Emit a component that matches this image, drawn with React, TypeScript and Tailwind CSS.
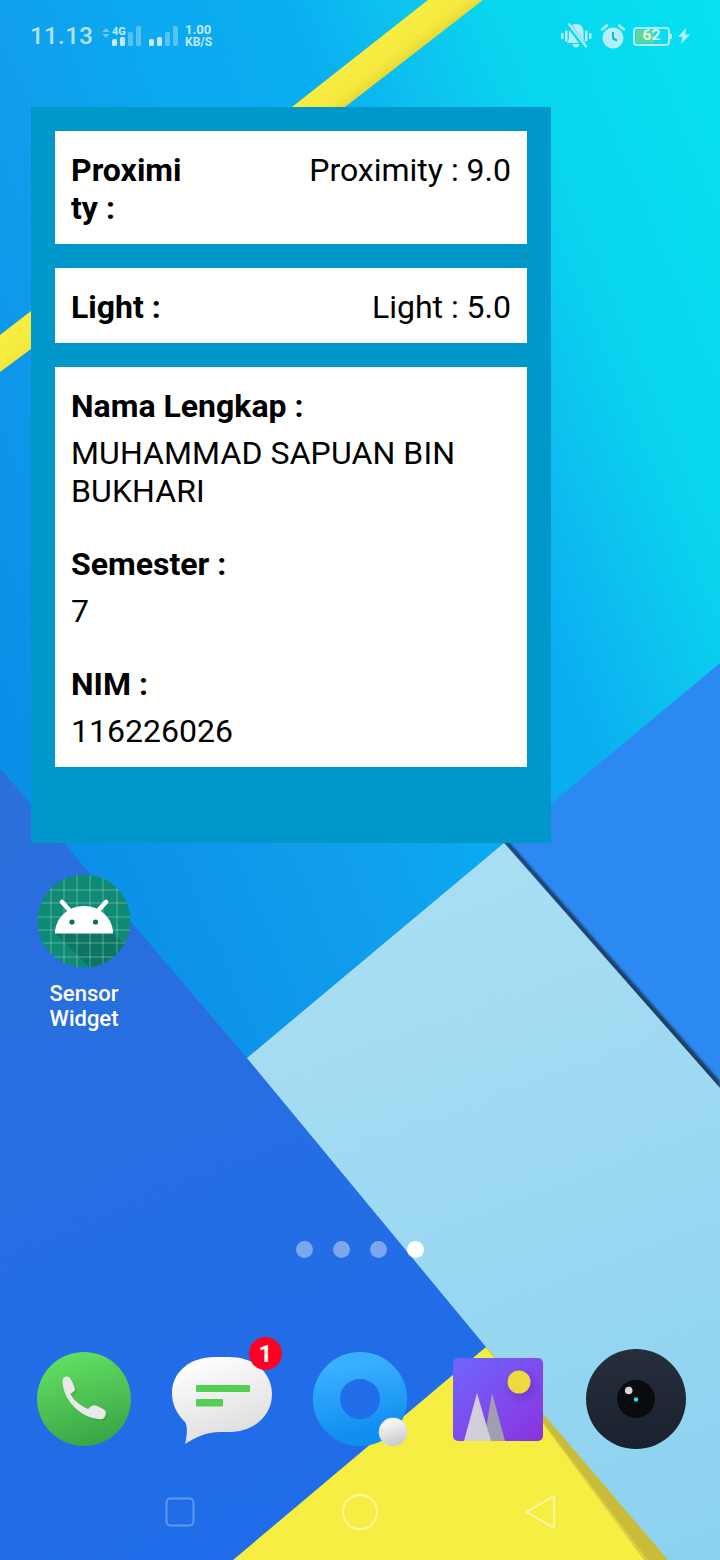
const ICON_TINT = "#b4eefa";

function Wallpaper() {
  return (
    <svg className="absolute inset-0" width="720" height="1560" viewBox="0 0 720 1560">
      <defs>
        <linearGradient id="sky" gradientUnits="userSpaceOnUse" x1="720" y1="0" x2="-144" y2="360">
          <stop offset="0" stopColor="#05e2f1" />
          <stop offset="0.24" stopColor="#08d4ef" />
          <stop offset="0.32" stopColor="#0cc4ef" />
          <stop offset="0.43" stopColor="#0aaef2" />
          <stop offset="0.6" stopColor="#0aa8f0" />
          <stop offset="0.71" stopColor="#109fed" />
          <stop offset="1" stopColor="#0a8fe8" />
        </linearGradient>
        <linearGradient id="leftBlue" gradientUnits="userSpaceOnUse" x1="0" y1="770" x2="300" y2="1500">
          <stop offset="0" stopColor="#2b6fdb" />
          <stop offset="1" stopColor="#1f6cea" />
        </linearGradient>
        <linearGradient id="paleBlue" gradientUnits="userSpaceOnUse" x1="450" y1="900" x2="700" y2="1560">
          <stop offset="0" stopColor="#a8def3" />
          <stop offset="1" stopColor="#8bd2f1" />
        </linearGradient>
        <linearGradient id="stripe" gradientUnits="userSpaceOnUse" x1="385" y1="30" x2="412" y2="65">
          <stop offset="0" stopColor="#f8ee42" />
          <stop offset="0.55" stopColor="#f6ea40" />
          <stop offset="1" stopColor="#e0d02e" />
        </linearGradient>
        <linearGradient id="stripeLow" gradientUnits="userSpaceOnUse" x1="8" y1="335" x2="30" y2="365">
          <stop offset="0" stopColor="#f8ee42" />
          <stop offset="0.55" stopColor="#f6ea40" />
          <stop offset="1" stopColor="#e0d02e" />
        </linearGradient>
        <filter id="blur2">
          <feGaussianBlur stdDeviation="1.2" />
        </filter>
        <filter id="grain">
          <feTurbulence type="fractalNoise" baseFrequency="0.9" numOctaves="2" />
          <feColorMatrix values="0 0 0 0 0.5  0 0 0 0 0.5  0 0 0 0 0.5  0 0 0 0.9 -0.35" />
        </filter>
      </defs>
      <rect width="720" height="1560" fill="url(#sky)" />
      <polygon points="428,0 483,0 345,107 292,107" fill="url(#stripe)" />
      <polygon points="0,335 31,311 31,349 0,372" fill="url(#stripeLow)" />
      <polygon points="720,663 504,843 720,1088" fill="#2b89f2" />
      <polygon points="0,768 247,1058 488,1349 233,1560 0,1560" fill="url(#leftBlue)" />
      <polygon points="503,841 508,841 720,1081 720,1091" fill="#1c3f66" filter="url(#blur2)" />
      <polygon points="247,1058 504,843 720,1088 720,1560 668,1560 486,1347" fill="url(#paleBlue)" />
      <polygon points="486,1347 233,1560 668,1560" fill="#f7ee42" />
      <polygon points="486,1347 649,1560 644,1560" fill="#dccf3c" />
      <polygon points="486,1347 668,1560 648,1560" fill="#c8bc38" />
      <rect width="720" height="1560" filter="url(#grain)" opacity="0.06" />
    </svg>
  );
}

function SignalBars({ label }: { label?: boolean }) {
  return (
    <svg width="30" height="22" viewBox="0 0 30 22" fill="#c6e8fb">
      {label ? (
        <text x="0" y="9" fontFamily="Roboto, sans-serif" fontWeight="700" fontSize="11" fill="#c6e8fb">
          4G
        </text>
      ) : null}
      <rect x="0" y="13" width="5" height="7" rx="1.5" />
      <rect x="8" y="11" width="5" height="9" rx="1.5" />
      <rect x="16" y="6" width="5" height="14" rx="1.5" opacity="0.4" />
      <rect x="24" y="0" width="5" height="20" rx="1.5" opacity="0.4" />
    </svg>
  );
}

function StatusBar() {
  return (
    <div className="flex h-[72px] items-center justify-between pl-[30px] pr-[30px] font-['Roboto',sans-serif]">
      <div className="flex items-center">
        <span className="w-[72px] text-[24px] font-medium leading-none tracking-[0.4px] text-[#b7e1f9]">11.13</span>
        <svg width="8" height="10" viewBox="0 0 8 10" className="mb-[6px] mr-[2px]" fill="#7cc6f5">
          <path d="M4 0 7.5 4H.5zM4 10 .5 6h7z" />
        </svg>
        <div className="mt-[1px]">
          <SignalBars label />
        </div>
        <div className="ml-[7px] mt-[1px]">
          <SignalBars />
        </div>
        <div className="ml-[6px] flex flex-col text-[13px] font-bold leading-[12px] text-[#c6e8fb]">
          <span>1.00</span>
          <span className="text-[12px]">KB/S</span>
        </div>
      </div>
      <div className="flex items-center">
        <svg width="34" height="26" viewBox="0 0 34 26" fill={ICON_TINT}>
          <rect x="2" y="10" width="2.5" height="6" rx="1" />
          <rect x="6" y="7.5" width="2.5" height="11" rx="1" />
          <rect x="26" y="7.5" width="2.5" height="11" rx="1" />
          <rect x="30" y="10" width="2.5" height="6" rx="1" />
          <path d="M17 1c5 0 7.500 3.300 7.500 8v6l2 5H8l2-4.500V9c0-5 3-8 7-8zM13.500 21h7c-.3 2.200-1.700 3.500-3.500 3.500s-3.200-1.300-3.500-3.500z" />
          <path d="M8 0 27 25" stroke="#08d8ef" strokeWidth="5" />
          <path d="M9.500 .5 27.500 24" stroke={ICON_TINT} strokeWidth="2.2" />
        </svg>
        <svg width="26" height="26" viewBox="0 0 26 26" className="ml-[7px]" fill={ICON_TINT}>
          <circle cx="13" cy="15" r="10.5" />
          <path d="M13 9v6.5l4 2" fill="none" stroke="#1ab4d6" strokeWidth="2" />
          <path d="M2 6.500 7 2.500M24 6.500 19 2.500" fill="none" stroke={ICON_TINT} strokeWidth="2.4" strokeLinecap="round" />
        </svg>
        <div className="relative ml-[7px] flex h-[19px] w-[37px] items-center justify-center rounded-[4px] border-2 border-[#b4eefa] text-[15.5px] font-bold leading-none text-[#d8f8e4]">
          <div className="absolute bottom-[1px] left-[1px] top-[1px] w-[18px] rounded-[1px] bg-[#5ed89a]" />
          <span className="relative">62</span>
          <div className="absolute right-[-4px] top-[5px] h-[5px] w-[2px] bg-[#b4eefa]" />
        </div>
        <svg width="12" height="16" viewBox="0 0 12 16" className="ml-[8px]" fill={ICON_TINT}>
          <path d="M8 0 0 9h4.500L3 16l9-9.500H7.300z" />
        </svg>
      </div>
    </div>
  );
}

function Label({ children }: { children: string }) {
  return <div className="text-[32px] font-bold leading-[38px]">{children}</div>;
}

function SensorWidget() {
  return (
    <div className="ml-[31px] mt-[35px] flex h-[736px] w-[520px] flex-col gap-6 bg-[#0097cb] p-6 font-['Roboto',sans-serif] text-black">
      <div className="flex items-start justify-between bg-white px-4 pb-[17px] pt-[20px]">
        <div className="w-[116px] break-all text-[32px] font-bold leading-[38px]">Proximity :</div>
        <div className="text-[32px] leading-[38px]">Proximity : 9.0</div>
      </div>
      <div className="flex items-start justify-between bg-white px-4 pb-[17px] pt-[20px]">
        <Label>Light :</Label>
        <div className="text-[32px] leading-[38px]">Light : 5.0</div>
      </div>
      <div className="flex h-[400px] flex-col bg-white px-4 pt-[20px] text-[32px] leading-[38px]">
        <Label>Nama Lengkap :</Label>
        <div className="mt-[9px] tracking-[0.1px]">MUHAMMAD SAPUAN BIN BUKHARI</div>
        <div className="mt-[35px]">
          <Label>Semester :</Label>
        </div>
        <div className="mt-[9px]">7</div>
        <div className="mt-[35px]">
          <Label>NIM :</Label>
        </div>
        <div className="mt-[9px]">116226026</div>
      </div>
    </div>
  );
}

function AndroidIcon() {
  const lines = [51, 64, 77, 90, 103, 117];
  const rows = [890, 903, 917, 930, 943, 957];
  return (
    <svg width="94" height="94" viewBox="37 874 94 94">
      <defs>
        <clipPath id="disc">
          <circle cx="84" cy="921" r="46.5" />
        </clipPath>
      </defs>
      <circle cx="84" cy="921" r="46.5" fill="#0e8a75" />
      <g clipPath="url(#disc)">
        <polygon points="55,933 113,933 135,955 135,975 97,975" fill="#0a5c50" opacity="0.45" />
        {lines.map((x) => (
          <line key={x} x1={x} x2={x} y1="870" y2="970" stroke="#ffffff" strokeOpacity="0.32" strokeWidth="1" />
        ))}
        {rows.map((y) => (
          <line key={y} y1={y} y2={y} x1="35" x2="135" stroke="#ffffff" strokeOpacity="0.32" strokeWidth="1" />
        ))}
      </g>
      <path d="M55 933.500c0-15.500 13-27.500 29-27.500s29 12 29 27.500z" fill="#ffffff" />
      <path d="M62 902 72 913M106 902 96 913" stroke="#ffffff" strokeWidth="4.500" strokeLinecap="round" />
      <circle cx="72" cy="922" r="2.600" fill="#0f6b5c" />
      <circle cx="95.500" cy="922" r="2.600" fill="#0f6b5c" />
    </svg>
  );
}

function PhoneIcon() {
  const handset =
    "M62.500 1381C62.500 1377 66 1375.500 69 1377C71 1378 74.500 1386 75 1389C75.300 1391 72 1392.500 70.500 1394C74 1401 81 1406 88 1409C90 1407.500 92 1405 94 1405.200C97 1405.500 104 1409 105.500 1411C107 1414 104.500 1419.500 100.500 1419.300C80 1418 63 1400 62.500 1381Z";
  return (
    <svg width="138" height="100" viewBox="15 1349 138 100">
      <defs>
        <linearGradient id="phoneFill" x1="0.3" y1="0" x2="0.6" y2="1">
          <stop offset="0" stopColor="#63e162" />
          <stop offset="1" stopColor="#3aa445" />
        </linearGradient>
      </defs>
      <circle cx="84" cy="1399" r="47" fill="url(#phoneFill)" />
      <path d={handset} fill="#2f7f36" opacity="0.25" transform="translate(2 2)" />
      <path d={handset} fill="#e9e9e9" />
    </svg>
  );
}

function MessageIcon() {
  return (
    <div className="relative">
      <svg width="138" height="100" viewBox="153 1349 138 100">
        <defs>
          <linearGradient id="bubble" x1="0.2" y1="0" x2="0.6" y2="1">
            <stop offset="0" stopColor="#ffffff" />
            <stop offset="1" stopColor="#dcdcdc" />
          </linearGradient>
        </defs>
        <path
          d="M215 1357h14c26 0 43 16 43 37 0 22-18 38-44 38h-8c-14 0-24 5-35 12 2-8 3-17 0-22-8-8-13-17-13-29 0-21 18-36 43-36z"
          fill="url(#bubble)"
        />
        <rect x="196" y="1385" width="54" height="7" rx="1" fill="#52cf52" />
        <rect x="196" y="1399" width="27" height="7.500" rx="1" fill="#52cf52" />
      </svg>
      <div className="absolute left-[96px] top-[-12px] flex h-[33px] w-[33px] items-center justify-center rounded-full bg-[#ff0022] font-['Roboto',sans-serif] text-[24px] font-bold leading-none text-white">
        1
      </div>
    </div>
  );
}

function BrowserIcon() {
  return (
    <svg width="138" height="100" viewBox="291 1349 138 100">
      <defs>
        <linearGradient id="ring" x1="0.3" y1="0" x2="0.5" y2="1">
          <stop offset="0" stopColor="#38b0ff" />
          <stop offset="1" stopColor="#128ef0" />
        </linearGradient>
        <linearGradient id="ball" x1="0.3" y1="0" x2="0.6" y2="1">
          <stop offset="0" stopColor="#ffffff" />
          <stop offset="1" stopColor="#c8c8cc" />
        </linearGradient>
      </defs>
      <circle cx="360" cy="1399" r="33.500" fill="none" stroke="url(#ring)" strokeWidth="27" />
      <circle cx="393" cy="1432" r="14.200" fill="url(#ball)" />
    </svg>
  );
}

function GalleryIcon() {
  return (
    <svg width="138" height="100" viewBox="429 1349 138 100">
      <defs>
        <linearGradient id="gallery" x1="0" y1="0" x2="1" y2="1">
          <stop offset="0" stopColor="#6f66ff" />
          <stop offset="1" stopColor="#8b33dd" />
        </linearGradient>
        <radialGradient id="sunShade" cx="0.5" cy="0.5" r="0.5">
          <stop offset="0" stopColor="#4a20a0" stopOpacity="0.45" />
          <stop offset="1" stopColor="#4a20a0" stopOpacity="0" />
        </radialGradient>
      </defs>
      <rect x="453" y="1358" width="90" height="83" rx="5" fill="url(#gallery)" />
      <circle cx="522" cy="1386" r="19" fill="url(#sunShade)" />
      <circle cx="519" cy="1382" r="11.500" fill="#eed93f" />
      <polygon points="492,1393 505,1441 484,1441" fill="#a19eb0" />
      <polygon points="477,1393 491,1441 464,1441" fill="#d2cfda" />
    </svg>
  );
}

function CameraIcon() {
  return (
    <svg width="138" height="100" viewBox="567 1349 138 100">
      <defs>
        <linearGradient id="cameraBody" x1="0.5" y1="0" x2="0.5" y2="1">
          <stop offset="0" stopColor="#262e3d" />
          <stop offset="1" stopColor="#1a212e" />
        </linearGradient>
      </defs>
      <circle cx="636" cy="1399" r="50" fill="url(#cameraBody)" />
      <circle cx="636" cy="1399" r="19" fill="#090b0f" />
      <circle cx="628.700" cy="1390.500" r="3.800" fill="#d8d6d6" />
      <circle cx="636" cy="1399.500" r="2.300" fill="#22dfe0" />
    </svg>
  );
}

function NavBar() {
  return (
    <div className="mt-[43px] grid grid-cols-3 px-[90px]">
      <div className="flex justify-center">
        <svg width="40" height="40" viewBox="0 0 40 40">
          <rect x="6.500" y="6.500" width="27" height="27" rx="4" fill="none" stroke="#ffffff" strokeOpacity="0.3" strokeWidth="2" />
        </svg>
      </div>
      <div className="flex justify-center">
        <svg width="40" height="40" viewBox="0 0 40 40">
          <circle cx="20" cy="20" r="17" fill="none" stroke="#ffffff" strokeOpacity="0.55" strokeWidth="1.800" />
        </svg>
      </div>
      <div className="flex justify-center">
        <svg width="40" height="40" viewBox="0 0 40 40">
          <path d="M6.500 20 34 4v32z" fill="none" stroke="#ffffff" strokeOpacity="0.55" strokeWidth="2" strokeLinejoin="round" />
        </svg>
      </div>
    </div>
  );
}

export default function App() {
  return (
    <div className="relative h-[1560px] w-[720px] overflow-hidden">
      <Wallpaper />
      <div className="relative flex flex-col">
        <StatusBar />
        <SensorWidget />

        <div className="ml-[15px] mt-[31px] flex w-[138px] flex-col items-center">
          <AndroidIcon />
          <div className="mt-[13px] text-center font-['Roboto',sans-serif] text-[22px] font-medium leading-[25px] text-white">
            Sensor
            <br />
            Widget
          </div>
        </div>

        <div className="mt-[210px] flex justify-center gap-5">
          <div className="size-[17px] rounded-full bg-white/40" />
          <div className="size-[17px] rounded-full bg-white/40" />
          <div className="size-[17px] rounded-full bg-white/40" />
          <div className="size-[17px] rounded-full bg-white" />
        </div>

        <div className="mt-[91px] grid h-[100px] grid-cols-5 px-[15px]">
          <PhoneIcon />
          <MessageIcon />
          <BrowserIcon />
          <GalleryIcon />
          <CameraIcon />
        </div>

        <NavBar />
      </div>
    </div>
  );
}
